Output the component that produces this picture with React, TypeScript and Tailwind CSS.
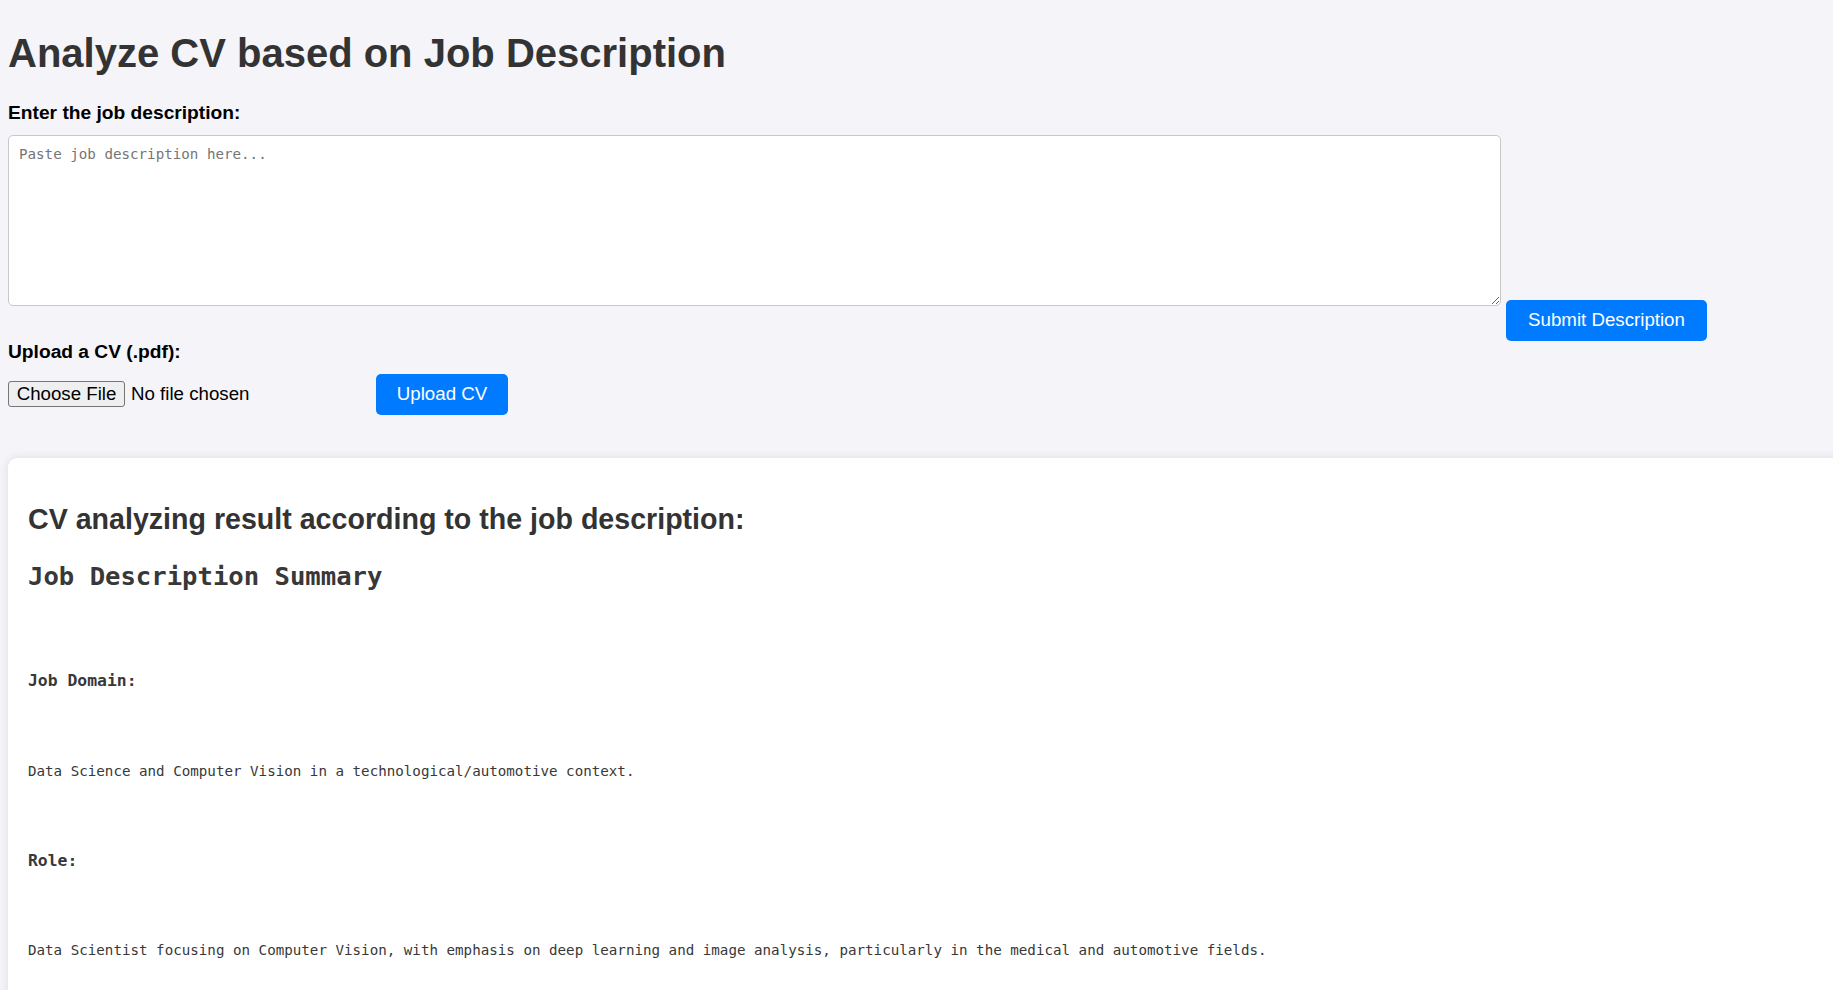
import { useState } from "react";

const sans = "font-['Liberation_Sans',Arial,sans-serif]";
const mono = "font-['DejaVu_Sans_Mono',monospace]";

export default function App() {
  const [jobDesc, setJobDesc] = useState("");

  return (
    <div className={`min-h-screen overflow-hidden bg-[#f4f4f9] pl-[8px] pt-[30px] ${sans}`}>
      <h1 className="text-[40px] font-bold leading-[46px] text-[#333]">Analyze CV based on Job Description</h1>

      {/* Job description */}
      <label className="mt-[26px] block text-[19.2px] font-bold leading-[22px] text-black">
        Enter the job description:
      </label>
      <div className="flex items-start">
        <textarea
          value={jobDesc}
          onChange={(e) => setJobDesc(e.target.value)}
          placeholder="Paste job description here..."
          className={`mt-[11px] h-[171px] w-[1493px] rounded-[5px] border border-[#c8c8c8] bg-white px-[10px] py-[9px] text-[14.2px] leading-[18px] text-[#333] outline-none placeholder:text-[#757575] ${mono}`}
        />
        <button className="ml-[5px] mt-[176px] h-[41px] w-[201px] rounded-[5px] bg-[#007bff] text-[18.7px] text-white">
          Submit Description
        </button>
      </div>

      {/* CV upload */}
      <label className="block text-[19.2px] font-bold leading-[22px] text-black">Upload a CV (.pdf):</label>
      <div className="mt-[11px] flex items-center">
        <div className="flex w-[368px] items-center">
          <span className="flex h-[26px] w-[117px] items-center justify-center rounded-[3px] border border-[#767676] bg-[#efefef] text-[18.7px] text-black">
            Choose File
          </span>
          <span className="ml-[6px] text-[18.7px] text-black">No file chosen</span>
        </div>
        <button className="h-[41px] w-[132px] rounded-[5px] bg-[#007bff] text-[18.7px] text-white">Upload CV</button>
      </div>

      {/* Result */}
      <div className="mr-[-40px] mt-[43px] min-h-[600px] rounded-[9px] bg-white px-[20px] pt-[45px] shadow-[0_0_10px_rgba(0,0,0,0.1)]">
        <h2 className="text-[28.6px] font-bold leading-[33px] text-[#333]">
          CV analyzing result according to the job description:
        </h2>
        <div className={`text-[#383838] ${mono}`}>
          <h3 className="mt-[25px] text-[25.6px] font-bold leading-[30px]">Job Description Summary</h3>
          <p className="mt-[80px] text-[16.4px] font-bold leading-[20px]">Job Domain:</p>
          <p className="mt-[71px] text-[14.2px] leading-[18px]">
            Data Science and Computer Vision in a technological/automotive context.
          </p>
          <p className="mt-[71px] text-[16.4px] font-bold leading-[20px]">Role:</p>
          <p className="mt-[70px] text-[14.2px] leading-[18px]">
            Data Scientist focusing on Computer Vision, with emphasis on deep learning and image analysis, particularly in the medical and automotive fields.
          </p>
        </div>
      </div>
    </div>
  );
}
